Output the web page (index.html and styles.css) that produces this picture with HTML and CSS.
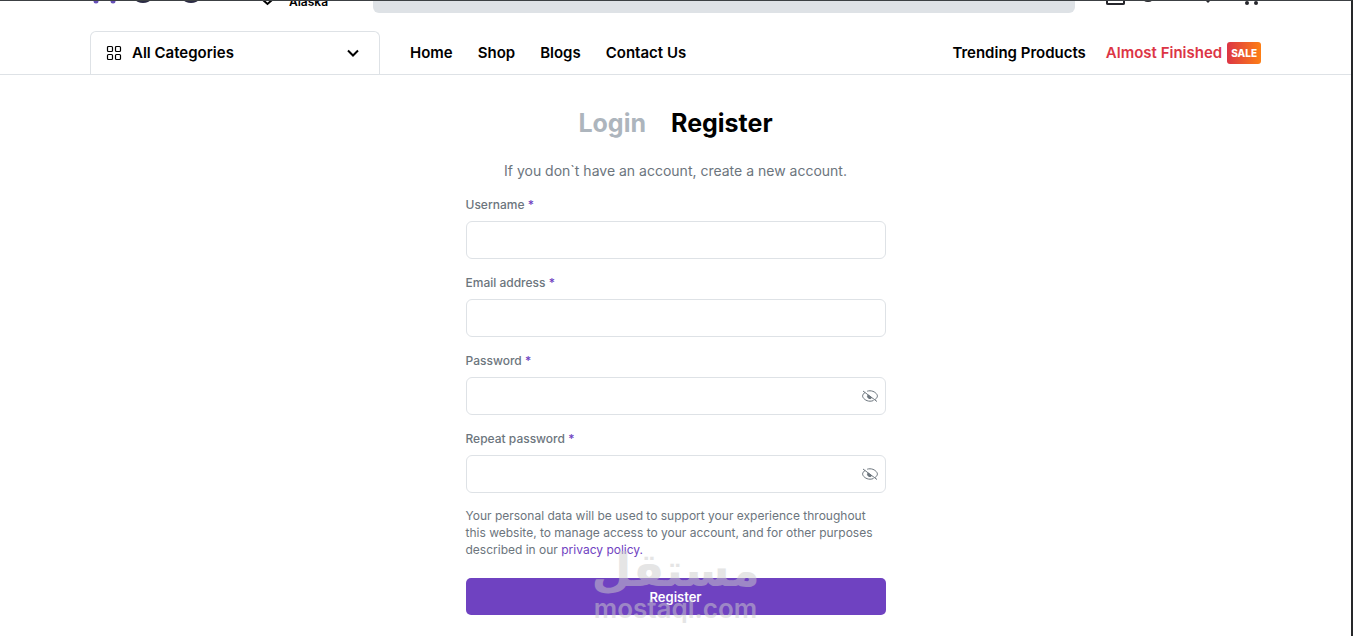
FILE: index.html
```
<!DOCTYPE html>
<html lang="en">
<head>
    <meta charset="UTF-8">
    <meta name="viewport" content="width=device-width, initial-scale=1.0">
    <title>Register</title>
    <link rel="stylesheet" href="styles.css">
</head>
<body>
    <header class="top-bar">
        <svg class="logo" width="172" height="12" viewBox="0 0 172 12">
            <g fill="#6650b8">
                <circle cx="6" cy="0" r="2.5"/>
                <circle cx="23" cy="0" r="2.5"/>
            </g>
            <g fill="#2b2b45">
                <ellipse cx="53" cy="-1" rx="7" ry="3"/>
                <ellipse cx="101" cy="-1" rx="7" ry="3"/>
            </g>
        </svg>
        <svg width="11" height="12" viewBox="0 0 11 12" fill="none" stroke="#000" stroke-width="2">
            <path d="M1 -1l4.500 4 4.500-4"/>
        </svg>
        <span class="place">Alaska</span>
        <div class="search"></div>
        <svg class="tools" width="155" height="12" viewBox="0 0 155 12">
            <path d="M1 -4V2.500Q1 3 2 3H17Q18 3 18 2.500V-4" fill="none" stroke="#26262c" stroke-width="2"/>
            <ellipse cx="42" cy="-1" rx="4" ry="2" fill="#26262c"/>
            <path d="M98 -2h8l-4 4z" fill="#26262c"/>
            <g fill="#26262c">
                <circle cx="141" cy="2" r="2"/>
                <circle cx="150" cy="2" r="2"/>
            </g>
        </svg>
    </header>

    <nav class="main-nav">
        <button type="button" class="categories">
            <svg width="16" height="16" viewBox="0 0 16 16" fill="none" stroke="#000" stroke-width="1.200">
                <rect x="1.500" y="1.500" width="5" height="5" rx="1"/>
                <rect x="9.500" y="1.500" width="5" height="5" rx="1"/>
                <rect x="1.500" y="9.500" width="5" height="5" rx="1"/>
                <rect x="9.500" y="9.500" width="5" height="5" rx="1"/>
            </svg>
            <span>All Categories</span>
            <svg class="arrow" width="12" height="8" viewBox="0 0 12 8" fill="none" stroke="#000" stroke-width="2">
                <path d="M1 1.500l5 5 5-5"/>
            </svg>
        </button>
        <div class="links">
            <a href="#">Home</a>
            <a href="#">Shop</a>
            <a href="#">Blogs</a>
            <a href="#">Contact Us</a>
        </div>
        <div class="links promo">
            <a href="#">Trending Products</a>
            <a href="#" class="finished">Almost Finished <span class="sale">SALE</span></a>
        </div>
    </nav>

    <main class="account">
        <div class="tabs">
            <a href="#">Login</a>
            <a href="#" class="active">Register</a>
        </div>
        <p class="intro">If you don`t have an account, create a new account.</p>

        <form id="registerForm">
            <label for="username">Username <b>*</b></label>
            <div class="field">
                <input type="text" id="username" name="username" required>
            </div>

            <label for="email">Email address <b>*</b></label>
            <div class="field">
                <input type="email" id="email" name="email" required>
            </div>

            <label for="password">Password <b>*</b></label>
            <div class="field">
                <input type="password" id="password" name="password" required>
                <button type="button" class="eye" aria-label="Show password">
                    <svg width="16" height="14" viewBox="0 0 16 14" fill="none" stroke="#6c757d">
                        <path d="M3.200 3.300C1.600 4.300 .6 5.900 .6 7c0 2 3.200 5.200 7.400 5.200 1.300 0 2.500-.3 3.500-.7M5.200 2.200c.9-.3 1.800-.4 2.800-.4 4.200 0 7.400 3.200 7.400 5.200 0 1.100-.9 2.500-2.200 3.500M1 2l14 10.500"/>
                        <path d="M6 6a2.200 2.200 0 0 0 3.600 2.700z" fill="#6c757d"/>
                    </svg>
                </button>
            </div>

            <label for="repeat">Repeat password <b>*</b></label>
            <div class="field">
                <input type="password" id="repeat" name="repeat" required>
                <button type="button" class="eye" aria-label="Show password">
                    <svg width="16" height="14" viewBox="0 0 16 14" fill="none" stroke="#6c757d">
                        <path d="M3.200 3.300C1.600 4.300 .6 5.900 .6 7c0 2 3.200 5.200 7.400 5.200 1.300 0 2.500-.3 3.500-.7M5.200 2.200c.9-.3 1.800-.4 2.800-.4 4.200 0 7.400 3.200 7.400 5.200 0 1.100-.9 2.500-2.200 3.500M1 2l14 10.500"/>
                        <path d="M6 6a2.200 2.200 0 0 0 3.600 2.700z" fill="#6c757d"/>
                    </svg>
                </button>
            </div>

            <p class="policy">Your personal data will be used to support your experience throughout this website, to manage access to your account, and for other purposes described in our <a href="#">privacy policy.</a></p>

            <div class="submit">
                <button type="submit">Register</button>
                <div class="watermark">
                    <span class="arabic" lang="ar" dir="rtl">مستقل</span>
                    <span class="latin">mostaql.com</span>
                </div>
            </div>
        </form>
    </main>
</body>
</html>
```
FILE: styles.css
```
* {
    box-sizing: border-box;
}

body {
    margin: 0;
    min-height: 100vh;
    overflow: hidden;
    border-top: 1px solid #3c4043;
    border-right: 2px solid #26282a;
    background-color: #fff;
    color: #000;
    font-family: Inter, "Liberation Sans", sans-serif;
}

a {
    color: inherit;
    text-decoration: none;
}

button {
    font-family: inherit;
    cursor: pointer;
}

/* Header, scrolled almost out of view */
.top-bar {
    display: flex;
    align-items: flex-end;
    height: 12px;
    padding: 0 90px;
    overflow: hidden;
}

.top-bar svg {
    flex: none;
}

.place {
    flex: none;
    width: 84px;
    margin-left: 16px;
    height: 18px;
    line-height: 14px;
    font-size: 12px;
    font-weight: 600;
}

.search {
    flex: 1;
    height: 40px;
    border-radius: 6px;
    background-color: #dee2e6;
}

.tools {
    margin-left: 31px;
}

.main-nav {
    display: flex;
    margin-top: 18px;
    padding: 0 90px;
    border-bottom: 1px solid #dee2e6;
    font-size: 15px;
    font-weight: 600;
}

.categories {
    display: flex;
    align-items: center;
    gap: 10px;
    width: 290px;
    height: 43px;
    padding: 0 20px 1px 15px;
    border: 1px solid #dee2e6;
    border-bottom: none;
    border-radius: 6px 6px 0 0;
    background: none;
    color: #000;
    font-size: 15px;
    font-weight: 600;
}

.arrow {
    margin-left: auto;
}

.links {
    display: flex;
    align-items: center;
    gap: 25px;
    margin-left: 30px;
}

.promo {
    gap: 20px;
    margin-left: auto;
}

.finished {
    display: flex;
    align-items: center;
    gap: 5px;
    color: #dc3545;
}

.sale {
    padding: 0 4px;
    border-radius: 3px;
    background: linear-gradient(90deg, #dc3545, #fd7e14);
    color: #fff;
    font-size: 10px;
    font-weight: 800;
    line-height: 22px;
}

.account {
    width: 100%;
    max-width: 420px;
    margin: 0 auto;
    padding-top: 28px;
}

.tabs {
    display: flex;
    justify-content: center;
    gap: 25px;
    color: #adb5bd;
    font-size: 25px;
    font-weight: 700;
    line-height: 40px;
}

.tabs .active {
    color: #000;
}

.intro {
    margin: 18px 0 14px;
    color: #6c757d;
    font-size: 14px;
    line-height: 20px;
    text-align: center;
}

label {
    display: block;
    margin-bottom: 6px;
    color: #6c757d;
    font-size: 12px;
    font-weight: 500;
    line-height: 20px;
}

label b {
    color: #6f42c1;
    font-weight: 500;
}

.field {
    position: relative;
    margin-bottom: 14px;
}

.field input {
    display: block;
    width: 100%;
    height: 38px;
    padding: 0 12px;
    border: 1px solid #dee2e6;
    border-radius: 6px;
    background-color: #fff;
    font-size: 14px;
}

.eye {
    display: flex;
    align-items: center;
    position: absolute;
    top: 0;
    right: 8px;
    height: 38px;
    padding: 0;
    border: none;
    background: none;
}

.policy {
    margin: 0 0 20px;
    color: #6c757d;
    font-size: 12px;
    line-height: 17px;
}

.policy a {
    color: #6f42c1;
}

.submit {
    position: relative;
}

.submit button {
    display: block;
    width: 100%;
    height: 37px;
    border: none;
    border-radius: 5px;
    background-color: #6f42c1;
    color: #fff;
    font-size: 13px;
    font-weight: 600;
}

.watermark {
    display: flex;
    flex-direction: column;
    align-items: center;
    position: absolute;
    top: -34px;
    left: 0;
    right: 0;
    color: #ccc;
    opacity: 0.5;
    pointer-events: none;
}

.arabic {
    font-family: "DejaVu Sans", sans-serif;
    font-size: 46px;
    font-weight: 700;
    line-height: 52px;
}

.latin {
    font-size: 26px;
    font-weight: 600;
    line-height: 26px;
}
```
